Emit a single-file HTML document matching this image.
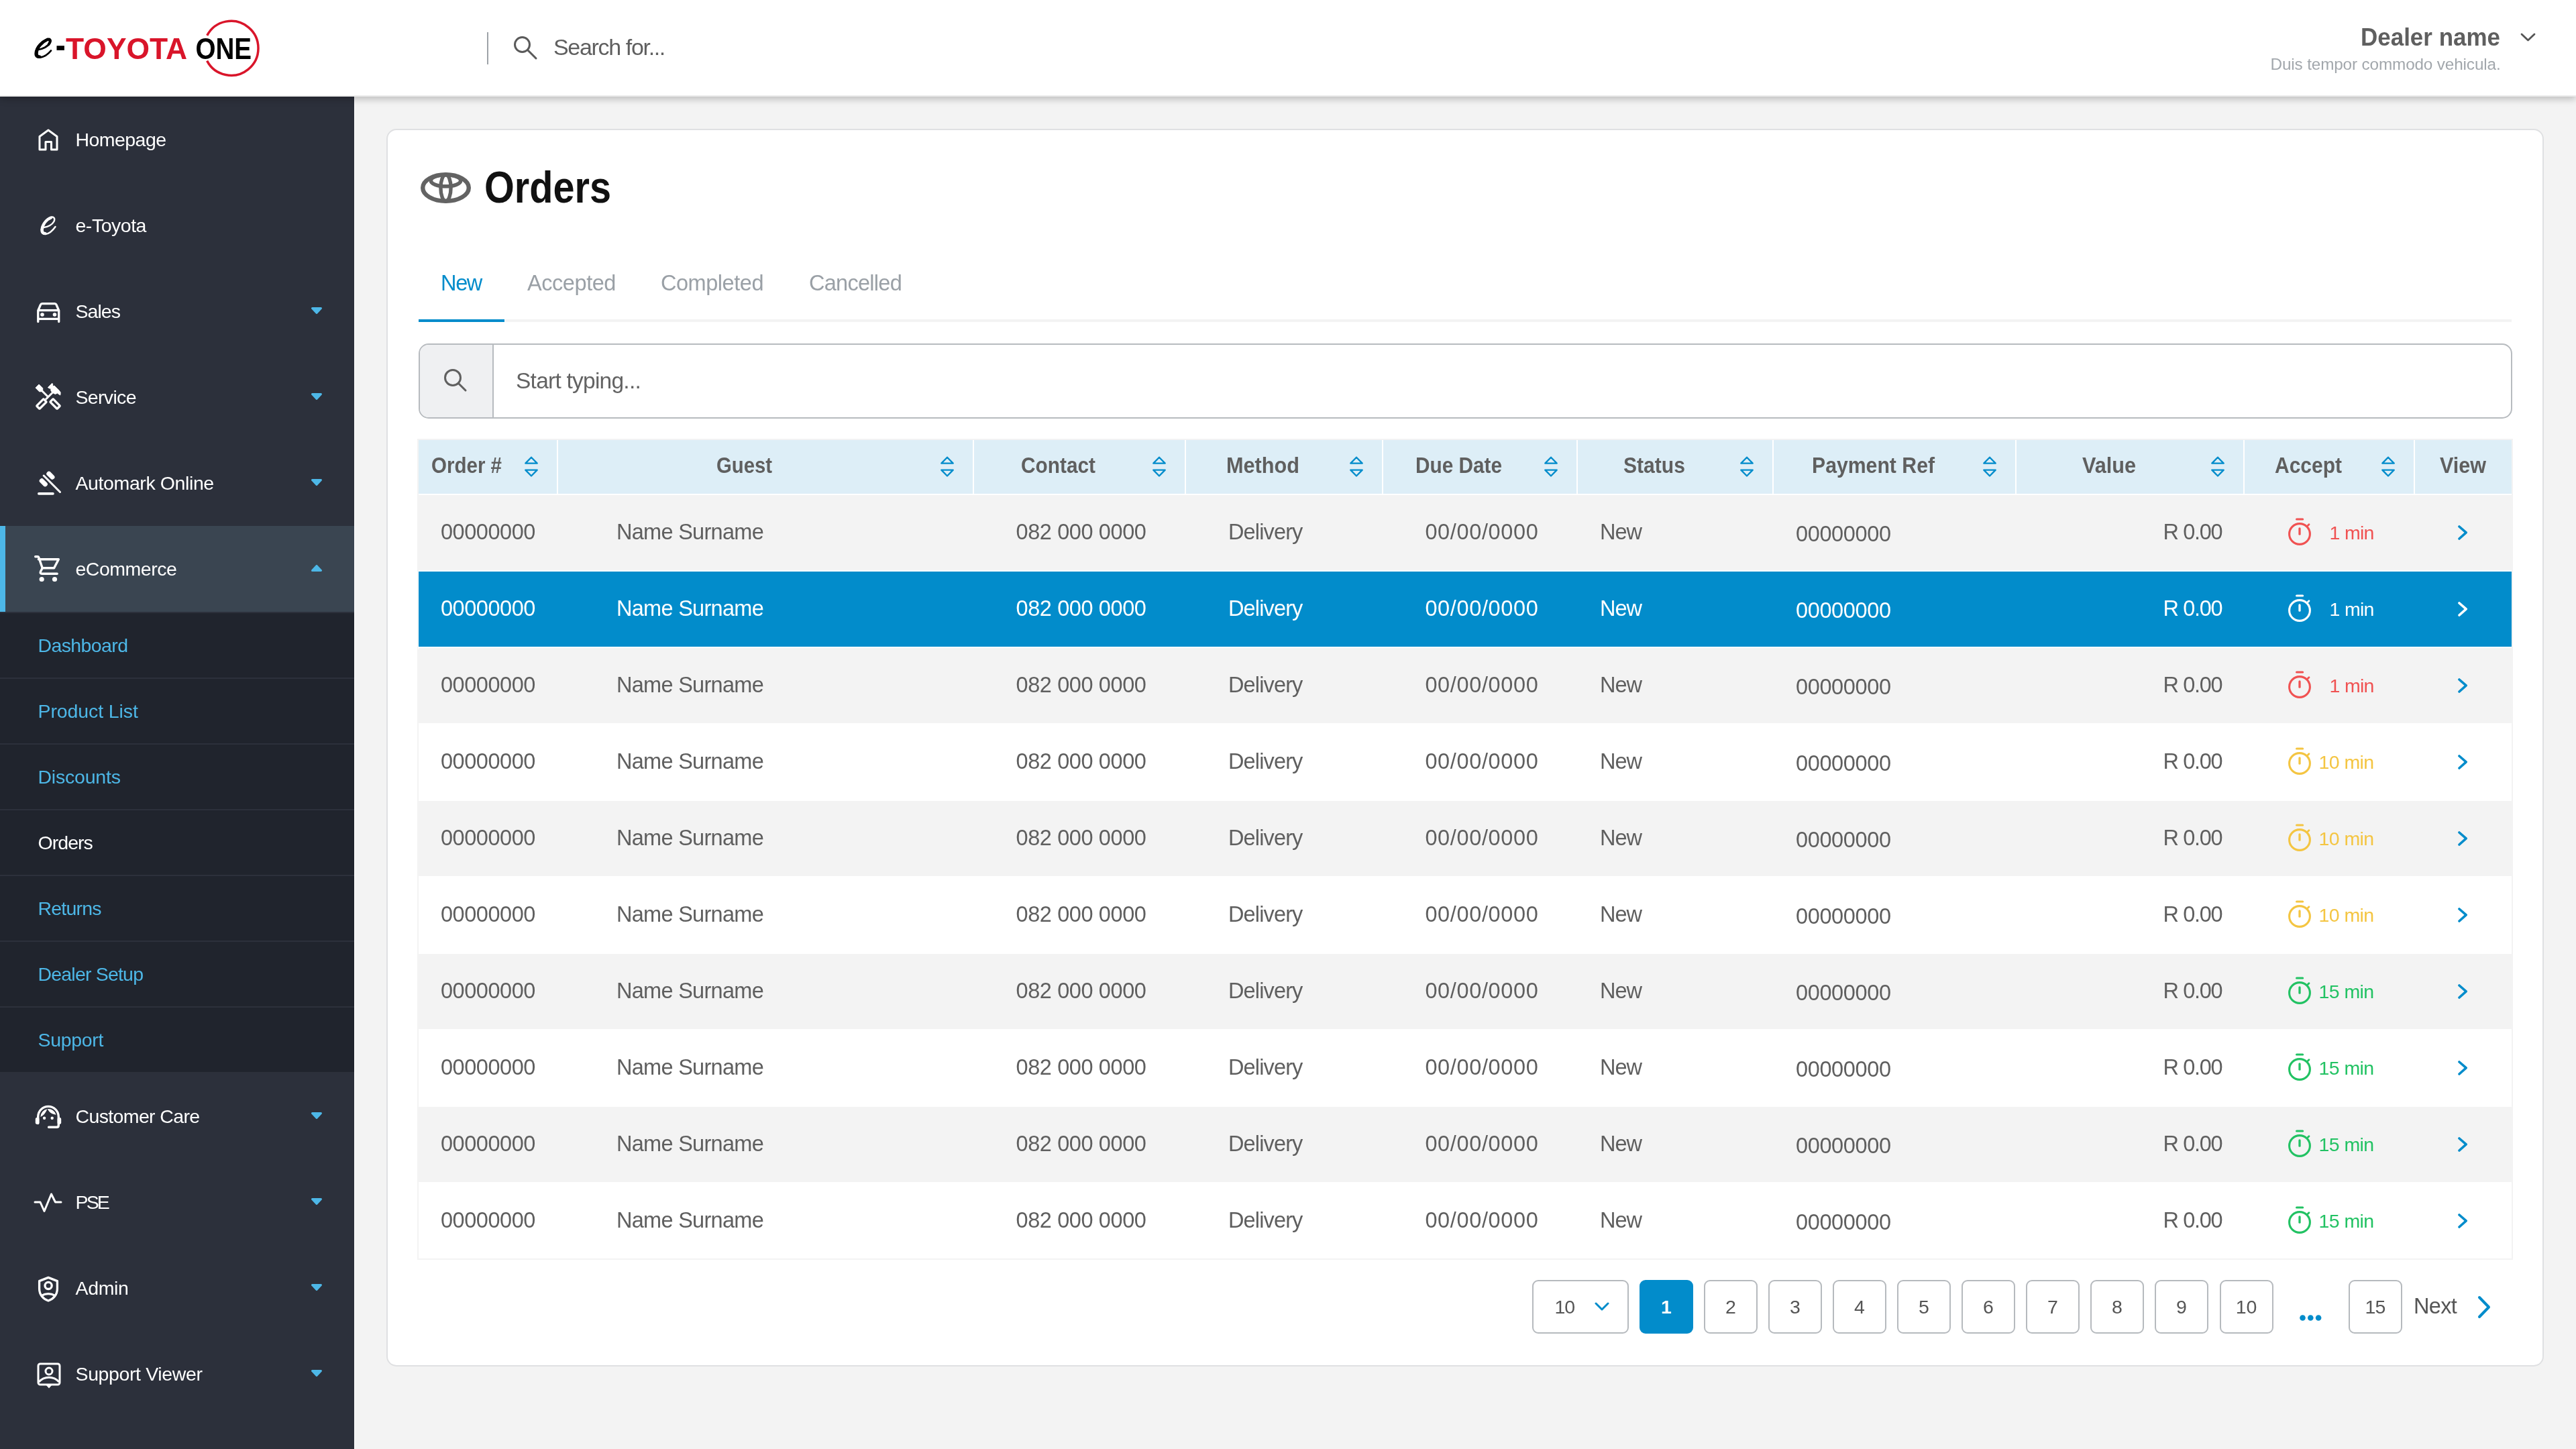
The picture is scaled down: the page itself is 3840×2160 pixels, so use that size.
<!DOCTYPE html>
<html><head><meta charset="utf-8"><title>Orders</title>
<style>
html,body{margin:0;padding:0;width:3840px;height:2160px;overflow:hidden;font-family:"Liberation Sans", sans-serif;}
</style></head><body>
<div style="position:absolute;left:0;top:0;width:3840px;height:2160px;overflow:hidden;will-change:transform">
<div style="position:absolute;left:0;top:0;width:3840px;height:2160px;background:#f3f3f3"></div>
<div style="position:absolute;left:0;top:144px;width:528px;height:2016px;background:#2c303b"></div>
<div style="position:absolute;left:528px;top:144px;width:1px;height:2016px;background:#ffffff"></div>
<div style="position:absolute;left:0;top:784px;width:528px;height:128px;background:#3a4551"></div>
<div style="position:absolute;left:0;top:784px;width:8px;height:128px;background:#4db7e7"></div>
<div style="position:absolute;left:0;top:912px;width:528px;height:686px;background:#20242d"></div>
<div style="position:absolute;left:0;top:912px;width:528px;height:2px;background:#2c303b"></div>
<div style="position:absolute;left:0;top:1010px;width:528px;height:2px;background:#2c303b"></div>
<div style="position:absolute;left:0;top:1108px;width:528px;height:2px;background:#2c303b"></div>
<div style="position:absolute;left:0;top:1206px;width:528px;height:2px;background:#2c303b"></div>
<div style="position:absolute;left:0;top:1304px;width:528px;height:2px;background:#2c303b"></div>
<div style="position:absolute;left:0;top:1402px;width:528px;height:2px;background:#2c303b"></div>
<div style="position:absolute;left:0;top:1500px;width:528px;height:2px;background:#2c303b"></div>
<div style="position:absolute;left:0;top:0;width:3840px;height:142px;background:#fff;border-bottom:2px solid #ececec;box-shadow:0 4px 10px rgba(0,0,0,0.22);z-index:2"></div>
<svg style="position:absolute;left:0;top:0;z-index:3" width="420" height="144" viewBox="0 0 420 144">
<path d="M 308.7 52.9 A 40.5 40.5 0 1 1 308.6 90.6" fill="none" stroke="#d9152a" stroke-width="3.5"/>
<text x="291.5" y="87.6" textLength="83.6" lengthAdjust="spacingAndGlyphs" font-family="Liberation Sans" font-weight="700" font-size="44.5" fill="#000">ONE</text>
<text x="98" y="87.8" textLength="181" lengthAdjust="spacingAndGlyphs" font-family="Liberation Sans" font-weight="700" font-size="44.5" fill="#d9152a">TOYOTA</text>
<rect x="84.5" y="68.2" width="11.4" height="6.7" fill="#000"/>
<path d="M57 73.8 C 63 73.3, 71.5 69.5, 74.8 63.5 C 76.8 59.5, 74.5 57, 70.5 58.5 C 62 61.5, 53.3 70.5, 52.8 79.5 C 52.6 84.3, 55.5 86.2, 60 85.5 C 66 84.7, 72 80.5, 76 75.5" fill="none" stroke="#000" stroke-width="2.8" stroke-linecap="round"/>
<path d="M70.5 59 C 63 62.3, 54.8 70.5, 54.5 79 C 54.3 83, 56 84.5, 59 84.6" fill="none" stroke="#000" stroke-width="4.6" stroke-linecap="round"/>
<path d="M72 59 C 75 59.5, 75.5 62.5, 72.5 66.3" fill="none" stroke="#000" stroke-width="3.8" stroke-linecap="round"/>
</svg>
<div style="position:absolute;left:726px;top:48px;width:2px;height:48px;background:#9ea3a8;z-index:3"></div>
<svg style="position:absolute;left:766px;top:54px;z-index:3" width="36" height="36" viewBox="0 0 36 36"><circle cx="12.5" cy="12.5" r="11" fill="none" stroke="#5a5a5a" stroke-width="3"/><line x1="20.5" y1="20.5" x2="33" y2="33" stroke="#5a5a5a" stroke-width="3" stroke-linecap="round"/></svg>
<div style="position:absolute;left:825.00px;top:53.10px;font-size:34px;line-height:34px;font-weight:400;color:#5f5f5f;letter-spacing:-1.333px;white-space:nowrap;z-index:3;">Search for...</div>
<div style="position:absolute;left:3519.00px;top:36.53px;font-size:37.5px;line-height:37.5px;font-weight:700;color:#5f5f5f;letter-spacing:0.000px;white-space:nowrap;z-index:3;transform:scaleX(0.9325);transform-origin:0 0;">Dealer name</div>
<svg style="position:absolute;left:3757px;top:49px;z-index:3" width="23" height="14" viewBox="0 0 23 14"><polyline points="2,2 11.5,11 21,2" fill="none" stroke="#555" stroke-width="2.8" stroke-linecap="round" stroke-linejoin="round"/></svg>
<div style="position:absolute;left:3384.50px;top:83.94px;font-size:24.3px;line-height:24.3px;font-weight:400;color:#a2a7ac;letter-spacing:-0.140px;white-space:nowrap;z-index:3;">Duis tempor commodo vehicula.</div>
<div style="position:absolute;left:112.50px;top:194.28px;font-size:28.5px;line-height:28.5px;font-weight:400;color:#ffffff;letter-spacing:-0.555px;white-space:nowrap;z-index:3;">Homepage</div>
<div style="position:absolute;left:112.50px;top:322.27px;font-size:28.5px;line-height:28.5px;font-weight:400;color:#ffffff;letter-spacing:-0.477px;white-space:nowrap;z-index:3;">e-Toyota</div>
<div style="position:absolute;left:112.50px;top:450.27px;font-size:28.5px;line-height:28.5px;font-weight:400;color:#ffffff;letter-spacing:-0.979px;white-space:nowrap;z-index:3;">Sales</div>
<svg style="position:absolute;left:464px;top:458px;z-index:3" width="16" height="10" viewBox="0 0 16 10"><path d="M1.5 1.5 L14.5 1.5 L8 8.5 Z" fill="#4db7e7" stroke="#4db7e7" stroke-width="3" stroke-linejoin="round"/></svg>
<div style="position:absolute;left:112.50px;top:578.27px;font-size:28.5px;line-height:28.5px;font-weight:400;color:#ffffff;letter-spacing:-0.664px;white-space:nowrap;z-index:3;">Service</div>
<svg style="position:absolute;left:464px;top:586px;z-index:3" width="16" height="10" viewBox="0 0 16 10"><path d="M1.5 1.5 L14.5 1.5 L8 8.5 Z" fill="#4db7e7" stroke="#4db7e7" stroke-width="3" stroke-linejoin="round"/></svg>
<div style="position:absolute;left:112.50px;top:706.27px;font-size:28.5px;line-height:28.5px;font-weight:400;color:#ffffff;letter-spacing:-0.398px;white-space:nowrap;z-index:3;">Automark Online</div>
<svg style="position:absolute;left:464px;top:714px;z-index:3" width="16" height="10" viewBox="0 0 16 10"><path d="M1.5 1.5 L14.5 1.5 L8 8.5 Z" fill="#4db7e7" stroke="#4db7e7" stroke-width="3" stroke-linejoin="round"/></svg>
<div style="position:absolute;left:112.50px;top:834.27px;font-size:28.5px;line-height:28.5px;font-weight:400;color:#ffffff;letter-spacing:-0.491px;white-space:nowrap;z-index:3;">eCommerce</div>
<svg style="position:absolute;left:464px;top:841.5px;z-index:3" width="16" height="10" viewBox="0 0 16 10"><path d="M8 1.5 L14.5 8.5 L1.5 8.5 Z" fill="#4db7e7" stroke="#4db7e7" stroke-width="3" stroke-linejoin="round"/></svg>
<div style="position:absolute;left:112.50px;top:1650.28px;font-size:28.5px;line-height:28.5px;font-weight:400;color:#ffffff;letter-spacing:-0.633px;white-space:nowrap;z-index:3;">Customer Care</div>
<svg style="position:absolute;left:464px;top:1658px;z-index:3" width="16" height="10" viewBox="0 0 16 10"><path d="M1.5 1.5 L14.5 1.5 L8 8.5 Z" fill="#4db7e7" stroke="#4db7e7" stroke-width="3" stroke-linejoin="round"/></svg>
<div style="position:absolute;left:112.50px;top:1778.28px;font-size:28.5px;line-height:28.5px;font-weight:400;color:#ffffff;letter-spacing:-2.877px;white-space:nowrap;z-index:3;">PSE</div>
<svg style="position:absolute;left:464px;top:1786px;z-index:3" width="16" height="10" viewBox="0 0 16 10"><path d="M1.5 1.5 L14.5 1.5 L8 8.5 Z" fill="#4db7e7" stroke="#4db7e7" stroke-width="3" stroke-linejoin="round"/></svg>
<div style="position:absolute;left:112.50px;top:1906.28px;font-size:28.5px;line-height:28.5px;font-weight:400;color:#ffffff;letter-spacing:-0.359px;white-space:nowrap;z-index:3;">Admin</div>
<svg style="position:absolute;left:464px;top:1914px;z-index:3" width="16" height="10" viewBox="0 0 16 10"><path d="M1.5 1.5 L14.5 1.5 L8 8.5 Z" fill="#4db7e7" stroke="#4db7e7" stroke-width="3" stroke-linejoin="round"/></svg>
<div style="position:absolute;left:112.50px;top:2034.28px;font-size:28.5px;line-height:28.5px;font-weight:400;color:#ffffff;letter-spacing:-0.382px;white-space:nowrap;z-index:3;">Support Viewer</div>
<svg style="position:absolute;left:464px;top:2042px;z-index:3" width="16" height="10" viewBox="0 0 16 10"><path d="M1.5 1.5 L14.5 1.5 L8 8.5 Z" fill="#4db7e7" stroke="#4db7e7" stroke-width="3" stroke-linejoin="round"/></svg>
<svg style="position:absolute;left:57px;top:192px;z-index:3" width="31" height="34" viewBox="0 0 31 34"><path d="M2 11.5 L15 2 L28 11.5 L28 31 L19.5 31 L19.5 19.5 L11 19.5 L11 31 L2 31 Z" fill="none" stroke="#fff" stroke-width="3" stroke-linecap="round" stroke-linejoin="round"/></svg>
<svg style="position:absolute;left:59px;top:321px;z-index:3" width="26" height="31" viewBox="0 0 26 31"><path d="M6 18 C 12 17.5, 19 14, 21.5 9 C 23.5 4.5, 21 1.5, 17 3 C 10 5.5, 3 13.5, 2.5 21.5 C 2.3 26, 5 28.5, 9 28 C 14 27.3, 19 23.5, 23.5 17" fill="none" stroke="#fff" stroke-width="2.4" stroke-linecap="round"/><path d="M17 3.5 C 10 6, 4 14, 3.8 21.5 C 3.6 25.5, 5.5 27, 8.5 27" fill="none" stroke="#fff" stroke-width="4.2" stroke-linecap="round"/></svg>
<svg style="position:absolute;left:55px;top:451px;z-index:3" width="35" height="31" viewBox="0 0 35 31"><path d="M1.75 28.5 L1.75 12 L5.4 3.4 Q 6.1 1.7 7.9 1.7 L26.6 1.7 Q 28.4 1.7 29.1 3.4 L32.75 12 L32.75 28.5" fill="none" stroke="#fff" stroke-width="3.3" stroke-linecap="round" stroke-linejoin="round"/><line x1="1.75" y1="11.6" x2="32.75" y2="11.6" stroke="#fff" stroke-width="3.3"/><line x1="1.75" y1="24.4" x2="32.75" y2="24.4" stroke="#fff" stroke-width="3.3"/><circle cx="8" cy="18" r="2.8" fill="#fff"/><circle cx="26.5" cy="18" r="2.8" fill="#fff"/></svg>
<svg style="position:absolute;left:52px;top:570px;z-index:3" width="40" height="42" viewBox="0 0 40 42"><polygon points="1,8.1 6.1,3 11.7,8.6 11.7,11.5 9.4,13.8 6.6,13.8" fill="#fff" stroke="#fff" stroke-width="1" stroke-linejoin="round"/><line x1="10" y1="12" x2="19.5" y2="21.5" stroke="#fff" stroke-width="3"/><rect x="-7.3" y="-3.1" width="14.6" height="6.2" rx="1" fill="none" stroke="#fff" stroke-width="3.3" transform="translate(30.1,32.1) rotate(45)"/><rect x="-7.3" y="-3.1" width="14.6" height="6.2" rx="1" fill="none" stroke="#fff" stroke-width="3.3" transform="translate(9.9,32.1) rotate(-45)"/><line x1="16" y1="25.5" x2="27.5" y2="14" stroke="#fff" stroke-width="3"/><polygon points="19.4,7.6 25.7,1.3 26.6,2.3 26.6,5.9 29,5 36.3,12.2 38.2,15.1 37.8,19 33.4,16.1 30.5,17.5 27.6,16.1 24.5,13.5 23.7,11.3 24.2,9.3 21.8,9" fill="#fff" stroke="#fff" stroke-width="1" stroke-linejoin="round"/></svg>
<svg style="position:absolute;left:52px;top:700px;z-index:3" width="40" height="40" viewBox="0 0 40 40"><g transform="translate(18.1,14) rotate(45)"><line x1="-7" y1="0" x2="27.5" y2="0" stroke="#fff" stroke-width="3" stroke-linecap="round"/><rect x="-7" y="-11" width="14" height="7" rx="3.2" fill="#fff"/><rect x="-7" y="4" width="14" height="7" rx="3.2" fill="#fff"/></g><line x1="5.8" y1="35.9" x2="27" y2="35.9" stroke="#fff" stroke-width="3.6" stroke-linecap="round"/></svg>
<svg style="position:absolute;left:51px;top:828px;z-index:3" width="40" height="40" viewBox="0 0 40 40"><path d="M1.7 1.8 L5 1.8 Q 6.3 1.8 6.8 3 L12.2 18.8 L29.6 18.8 L36.1 6.2 Q 36.6 5.8 36 5.8 L6.4 5.8" fill="none" stroke="#fff" stroke-width="3.4" stroke-linecap="round" stroke-linejoin="round"/><path d="M12.2 18.8 L9.5 24 Q 8.4 27.3 11.5 27.3 L34.2 27.3" fill="none" stroke="#fff" stroke-width="3.4" stroke-linecap="round" stroke-linejoin="round"/><circle cx="11.2" cy="35.5" r="3.6" fill="#fff"/><circle cx="30.5" cy="35.5" r="3.6" fill="#fff"/></svg>
<svg style="position:absolute;left:52px;top:1646px;z-index:3" width="40" height="40" viewBox="0 0 40 40"><path d="M4.7 28.5 L4.7 18.7 A 15.3 15.3 0 0 1 35.3 18.7 L35.3 31.5 Q 35.3 34.3 32.5 34.3 L20.6 34.3" fill="none" stroke="#fff" stroke-width="3.4" stroke-linecap="round"/><rect x="0.8" y="19.8" width="5.6" height="10.1" rx="2.7" fill="#fff"/><rect x="33.6" y="19.8" width="5.6" height="10.1" rx="2.7" fill="#fff"/><path d="M8.4 19 A 11.8 11.8 0 0 1 31.6 15.8 C 25.5 15.2, 21 12, 18.6 6.6 C 16.5 12.5, 13 17, 8.4 19 Z" fill="#fff"/><circle cx="14.1" cy="20.7" r="2.2" fill="#fff"/><circle cx="25.7" cy="20.7" r="2.2" fill="#fff"/></svg>
<svg style="position:absolute;left:50px;top:1777px;z-index:3" width="44" height="32" viewBox="0 0 44 32"><polyline points="2,15 10,15 16,28.5 26.5,3 32.5,15 41,15" fill="none" stroke="#fff" stroke-width="3" stroke-linecap="round" stroke-linejoin="round"/></svg>
<svg style="position:absolute;left:56px;top:1902px;z-index:3" width="32" height="40" viewBox="0 0 32 40"><path d="M16 2.4 L29.4 7.6 L29.4 19 C 29.4 28, 23.5 34.5, 16 37 C 8.5 34.5, 2.6 28, 2.6 19 L2.6 7.6 Z" fill="none" stroke="#fff" stroke-width="3.3" stroke-linejoin="round"/><circle cx="16.1" cy="14.4" r="5.1" fill="none" stroke="#fff" stroke-width="3.3"/><path d="M7 28.8 C 11.5 25.8, 20.5 25.8, 25 28.8" fill="none" stroke="#fff" stroke-width="3.3"/></svg>
<svg style="position:absolute;left:55px;top:2031px;z-index:3" width="36" height="40" viewBox="0 0 36 40"><rect x="2" y="2" width="32" height="31" rx="3" fill="none" stroke="#fff" stroke-width="3"/><circle cx="18" cy="13" r="5" fill="none" stroke="#fff" stroke-width="3"/><path d="M3 29 C 11 20, 25 20, 33 29" fill="none" stroke="#fff" stroke-width="3"/><path d="M13 33 L18 38.5 L23 33 Z" fill="#fff"/></svg>
<div style="position:absolute;left:56.50px;top:947.77px;font-size:28.5px;line-height:28.5px;font-weight:400;color:#4db7e7;letter-spacing:-0.604px;white-space:nowrap;z-index:3;">Dashboard</div>
<div style="position:absolute;left:56.50px;top:1045.78px;font-size:28.5px;line-height:28.5px;font-weight:400;color:#4db7e7;letter-spacing:-0.100px;white-space:nowrap;z-index:3;">Product List</div>
<div style="position:absolute;left:56.50px;top:1143.78px;font-size:28.5px;line-height:28.5px;font-weight:400;color:#4db7e7;letter-spacing:-0.216px;white-space:nowrap;z-index:3;">Discounts</div>
<div style="position:absolute;left:56.50px;top:1241.78px;font-size:28.5px;line-height:28.5px;font-weight:400;color:#ffffff;letter-spacing:-0.952px;white-space:nowrap;z-index:3;">Orders</div>
<div style="position:absolute;left:56.50px;top:1339.78px;font-size:28.5px;line-height:28.5px;font-weight:400;color:#4db7e7;letter-spacing:-0.800px;white-space:nowrap;z-index:3;">Returns</div>
<div style="position:absolute;left:56.50px;top:1437.78px;font-size:28.5px;line-height:28.5px;font-weight:400;color:#4db7e7;letter-spacing:-0.805px;white-space:nowrap;z-index:3;">Dealer Setup</div>
<div style="position:absolute;left:56.50px;top:1535.78px;font-size:28.5px;line-height:28.5px;font-weight:400;color:#4db7e7;letter-spacing:-0.333px;white-space:nowrap;z-index:3;">Support</div>
<div style="position:absolute;left:576px;top:192px;width:3212px;height:1840.5px;background:#fff;border:2px solid #dfe0e2;border-radius:15px"></div>
<svg style="position:absolute;left:627px;top:257px;z-index:3" width="75" height="46" viewBox="0 0 75 46"><ellipse cx="37.5" cy="23" rx="34.3" ry="19.8" fill="none" stroke="#636363" stroke-width="6.4"/><ellipse cx="37.5" cy="12.2" rx="22.2" ry="8.6" fill="none" stroke="#636363" stroke-width="5.6"/><ellipse cx="37.5" cy="23" rx="7.6" ry="19.8" fill="none" stroke="#636363" stroke-width="5.4"/></svg>
<div style="position:absolute;left:722.00px;top:245.25px;font-size:67px;line-height:67px;font-weight:700;color:#111111;letter-spacing:0.000px;white-space:nowrap;z-index:3;transform:scaleX(0.8602);transform-origin:0 0;">Orders</div>
<div style="position:absolute;left:657.00px;top:406.38px;font-size:32.5px;line-height:32.5px;font-weight:400;color:#028ccb;letter-spacing:-1.344px;white-space:nowrap;z-index:3;">New</div>
<div style="position:absolute;left:786.00px;top:406.38px;font-size:32.5px;line-height:32.5px;font-weight:400;color:#9aa0a6;letter-spacing:-0.439px;white-space:nowrap;z-index:3;">Accepted</div>
<div style="position:absolute;left:985.00px;top:406.38px;font-size:32.5px;line-height:32.5px;font-weight:400;color:#9aa0a6;letter-spacing:-0.464px;white-space:nowrap;z-index:3;">Completed</div>
<div style="position:absolute;left:1206.00px;top:406.38px;font-size:32.5px;line-height:32.5px;font-weight:400;color:#9aa0a6;letter-spacing:-0.727px;white-space:nowrap;z-index:3;">Cancelled</div>
<div style="position:absolute;left:753px;top:476px;width:2991px;height:4px;background:#f3f3f3"></div>
<div style="position:absolute;left:624px;top:476px;width:128px;height:4px;background:#028ccb"></div>
<div style="position:absolute;left:624px;top:512px;width:3117px;height:108px;border:2px solid #b7bbbf;border-radius:15px;background:#fff"></div>
<div style="position:absolute;left:626px;top:514px;width:108px;height:108px;background:#eff0f2;border-radius:13px 0 0 13px;border-right:2px solid #b7bbbf"></div>
<svg style="position:absolute;left:661px;top:549px;z-index:3" width="36" height="36" viewBox="0 0 36 36"><circle cx="14" cy="14" r="11.5" fill="none" stroke="#606060" stroke-width="3"/><line x1="22.5" y1="22.5" x2="33" y2="33" stroke="#606060" stroke-width="3" stroke-linecap="round"/></svg>
<div style="position:absolute;left:769.00px;top:550.52px;font-size:33.5px;line-height:33.5px;font-weight:400;color:#636363;letter-spacing:-0.758px;white-space:nowrap;z-index:3;">Start typing...</div>
<div style="position:absolute;left:622px;top:654px;width:3124px;height:1224px;background:#f3f3f3"></div>
<div style="position:absolute;left:624px;top:656px;width:3120px;height:80px;background:#ddeef7"></div>
<div style="position:absolute;left:830px;top:656px;width:2px;height:80px;background:#fff"></div>
<div style="position:absolute;left:1450px;top:656px;width:2px;height:80px;background:#fff"></div>
<div style="position:absolute;left:1766px;top:656px;width:2px;height:80px;background:#fff"></div>
<div style="position:absolute;left:2060px;top:656px;width:2px;height:80px;background:#fff"></div>
<div style="position:absolute;left:2350px;top:656px;width:2px;height:80px;background:#fff"></div>
<div style="position:absolute;left:2642px;top:656px;width:2px;height:80px;background:#fff"></div>
<div style="position:absolute;left:3004px;top:656px;width:2px;height:80px;background:#fff"></div>
<div style="position:absolute;left:3344px;top:656px;width:2px;height:80px;background:#fff"></div>
<div style="position:absolute;left:3598px;top:656px;width:2px;height:80px;background:#fff"></div>
<svg style="position:absolute;left:781px;top:679.5px;z-index:3" width="22" height="32" viewBox="0 0 22 32"><path d="M2.3 10.6 L11 1.7 L19.7 10.6 Z" fill="none" stroke="#028ccb" stroke-width="2.35" stroke-linejoin="round"/><path d="M2.3 20.6 L11 29.5 L19.7 20.6 Z" fill="none" stroke="#028ccb" stroke-width="2.35" stroke-linejoin="round"/></svg>
<div style="position:absolute;left:643.00px;top:678.38px;font-size:32.5px;line-height:32.5px;font-weight:700;color:#5f5f5f;letter-spacing:0.000px;white-space:nowrap;z-index:3;transform:scaleX(0.9082);transform-origin:0 0;">Order #</div>
<svg style="position:absolute;left:1401px;top:679.5px;z-index:3" width="22" height="32" viewBox="0 0 22 32"><path d="M2.3 10.6 L11 1.7 L19.7 10.6 Z" fill="none" stroke="#028ccb" stroke-width="2.35" stroke-linejoin="round"/><path d="M2.3 20.6 L11 29.5 L19.7 20.6 Z" fill="none" stroke="#028ccb" stroke-width="2.35" stroke-linejoin="round"/></svg>
<div style="position:absolute;left:1068.00px;top:678.38px;font-size:32.5px;line-height:32.5px;font-weight:700;color:#5f5f5f;letter-spacing:0.000px;white-space:nowrap;z-index:3;transform:scaleX(0.9011);transform-origin:0 0;">Guest</div>
<svg style="position:absolute;left:1717px;top:679.5px;z-index:3" width="22" height="32" viewBox="0 0 22 32"><path d="M2.3 10.6 L11 1.7 L19.7 10.6 Z" fill="none" stroke="#028ccb" stroke-width="2.35" stroke-linejoin="round"/><path d="M2.3 20.6 L11 29.5 L19.7 20.6 Z" fill="none" stroke="#028ccb" stroke-width="2.35" stroke-linejoin="round"/></svg>
<div style="position:absolute;left:1522.00px;top:678.38px;font-size:32.5px;line-height:32.5px;font-weight:700;color:#5f5f5f;letter-spacing:0.000px;white-space:nowrap;z-index:3;transform:scaleX(0.9175);transform-origin:0 0;">Contact</div>
<svg style="position:absolute;left:2011px;top:679.5px;z-index:3" width="22" height="32" viewBox="0 0 22 32"><path d="M2.3 10.6 L11 1.7 L19.7 10.6 Z" fill="none" stroke="#028ccb" stroke-width="2.35" stroke-linejoin="round"/><path d="M2.3 20.6 L11 29.5 L19.7 20.6 Z" fill="none" stroke="#028ccb" stroke-width="2.35" stroke-linejoin="round"/></svg>
<div style="position:absolute;left:1828.00px;top:678.38px;font-size:32.5px;line-height:32.5px;font-weight:700;color:#5f5f5f;letter-spacing:0.000px;white-space:nowrap;z-index:3;transform:scaleX(0.9435);transform-origin:0 0;">Method</div>
<svg style="position:absolute;left:2301px;top:679.5px;z-index:3" width="22" height="32" viewBox="0 0 22 32"><path d="M2.3 10.6 L11 1.7 L19.7 10.6 Z" fill="none" stroke="#028ccb" stroke-width="2.35" stroke-linejoin="round"/><path d="M2.3 20.6 L11 29.5 L19.7 20.6 Z" fill="none" stroke="#028ccb" stroke-width="2.35" stroke-linejoin="round"/></svg>
<div style="position:absolute;left:2110.00px;top:678.38px;font-size:32.5px;line-height:32.5px;font-weight:700;color:#5f5f5f;letter-spacing:0.000px;white-space:nowrap;z-index:3;transform:scaleX(0.9157);transform-origin:0 0;">Due Date</div>
<svg style="position:absolute;left:2593px;top:679.5px;z-index:3" width="22" height="32" viewBox="0 0 22 32"><path d="M2.3 10.6 L11 1.7 L19.7 10.6 Z" fill="none" stroke="#028ccb" stroke-width="2.35" stroke-linejoin="round"/><path d="M2.3 20.6 L11 29.5 L19.7 20.6 Z" fill="none" stroke="#028ccb" stroke-width="2.35" stroke-linejoin="round"/></svg>
<div style="position:absolute;left:2419.50px;top:678.38px;font-size:32.5px;line-height:32.5px;font-weight:700;color:#5f5f5f;letter-spacing:0.000px;white-space:nowrap;z-index:3;transform:scaleX(0.9262);transform-origin:0 0;">Status</div>
<svg style="position:absolute;left:2955px;top:679.5px;z-index:3" width="22" height="32" viewBox="0 0 22 32"><path d="M2.3 10.6 L11 1.7 L19.7 10.6 Z" fill="none" stroke="#028ccb" stroke-width="2.35" stroke-linejoin="round"/><path d="M2.3 20.6 L11 29.5 L19.7 20.6 Z" fill="none" stroke="#028ccb" stroke-width="2.35" stroke-linejoin="round"/></svg>
<div style="position:absolute;left:2701.00px;top:678.38px;font-size:32.5px;line-height:32.5px;font-weight:700;color:#5f5f5f;letter-spacing:0.000px;white-space:nowrap;z-index:3;transform:scaleX(0.9295);transform-origin:0 0;">Payment Ref</div>
<svg style="position:absolute;left:3295px;top:679.5px;z-index:3" width="22" height="32" viewBox="0 0 22 32"><path d="M2.3 10.6 L11 1.7 L19.7 10.6 Z" fill="none" stroke="#028ccb" stroke-width="2.35" stroke-linejoin="round"/><path d="M2.3 20.6 L11 29.5 L19.7 20.6 Z" fill="none" stroke="#028ccb" stroke-width="2.35" stroke-linejoin="round"/></svg>
<div style="position:absolute;left:3103.50px;top:678.38px;font-size:32.5px;line-height:32.5px;font-weight:700;color:#5f5f5f;letter-spacing:0.000px;white-space:nowrap;z-index:3;transform:scaleX(0.9420);transform-origin:0 0;">Value</div>
<svg style="position:absolute;left:3549px;top:679.5px;z-index:3" width="22" height="32" viewBox="0 0 22 32"><path d="M2.3 10.6 L11 1.7 L19.7 10.6 Z" fill="none" stroke="#028ccb" stroke-width="2.35" stroke-linejoin="round"/><path d="M2.3 20.6 L11 29.5 L19.7 20.6 Z" fill="none" stroke="#028ccb" stroke-width="2.35" stroke-linejoin="round"/></svg>
<div style="position:absolute;left:3390.50px;top:678.38px;font-size:32.5px;line-height:32.5px;font-weight:700;color:#5f5f5f;letter-spacing:0.000px;white-space:nowrap;z-index:3;transform:scaleX(0.9227);transform-origin:0 0;">Accept</div>
<div style="position:absolute;left:3637.00px;top:678.38px;font-size:32.5px;line-height:32.5px;font-weight:700;color:#5f5f5f;letter-spacing:0.000px;white-space:nowrap;z-index:3;transform:scaleX(0.9390);transform-origin:0 0;">View</div>
<div style="position:absolute;left:624px;top:736px;width:3120px;height:2px;background:#fff"></div>
<div style="position:absolute;left:624px;top:738px;width:3120px;height:112px;background:#f3f3f3"></div>
<div style="position:absolute;left:657.00px;top:776.58px;font-size:32.5px;line-height:32.5px;font-weight:400;color:#5f5f5f;letter-spacing:-0.451px;white-space:nowrap;z-index:3;">00000000</div>
<div style="position:absolute;left:919.00px;top:776.58px;font-size:32.5px;line-height:32.5px;font-weight:400;color:#5f5f5f;letter-spacing:-0.717px;white-space:nowrap;z-index:3;">Name Surname</div>
<div style="position:absolute;left:1514.50px;top:776.58px;font-size:32.5px;line-height:32.5px;font-weight:400;color:#5f5f5f;letter-spacing:-0.401px;white-space:nowrap;z-index:3;">082 000 0000</div>
<div style="position:absolute;left:1831.00px;top:776.58px;font-size:32.5px;line-height:32.5px;font-weight:400;color:#5f5f5f;letter-spacing:-0.861px;white-space:nowrap;z-index:3;">Delivery</div>
<div style="position:absolute;left:2124.40px;top:776.58px;font-size:32.5px;line-height:32.5px;font-weight:400;color:#5f5f5f;letter-spacing:0.633px;white-space:nowrap;z-index:3;">00/00/0000</div>
<div style="position:absolute;left:2385.00px;top:776.58px;font-size:32.5px;line-height:32.5px;font-weight:400;color:#5f5f5f;letter-spacing:-1.010px;white-space:nowrap;z-index:3;">New</div>
<div style="position:absolute;left:2677.00px;top:779.98px;font-size:32.5px;line-height:32.5px;font-weight:400;color:#5f5f5f;letter-spacing:-0.376px;white-space:nowrap;z-index:3;">00000000</div>
<div style="position:absolute;left:3224.40px;top:776.58px;font-size:32.5px;line-height:32.5px;font-weight:400;color:#5f5f5f;letter-spacing:-1.294px;white-space:nowrap;z-index:3;">R 0.00</div>
<svg style="position:absolute;left:3411px;top:769px;z-index:3" width="35" height="46" viewBox="0 0 35 46"><circle cx="17" cy="27" r="15.4" fill="none" stroke="#f05252" stroke-width="3.1"/><line x1="12.6" y1="5" x2="21.6" y2="5" stroke="#f05252" stroke-width="3.2" stroke-linecap="round"/><line x1="17" y1="19" x2="17" y2="27.2" stroke="#f05252" stroke-width="3.3" stroke-linecap="round"/><line x1="29.2" y1="14.6" x2="31" y2="12.8" stroke="#f05252" stroke-width="2.8" stroke-linecap="round"/></svg>
<div style="position:absolute;left:3472.60px;top:779.88px;font-size:28.5px;line-height:28.5px;font-weight:400;color:#f05252;letter-spacing:-0.741px;white-space:nowrap;z-index:3;">1 min</div>
<svg style="position:absolute;left:3663.5px;top:782.8px;z-index:3" width="16" height="23" viewBox="0 0 16 23"><polyline points="2,2 12.2,10.9 2,20" fill="none" stroke="#028ccb" stroke-width="3.6" stroke-linecap="round" stroke-linejoin="round"/></svg>
<div style="position:absolute;left:624px;top:850px;width:3120px;height:2px;background:#fff"></div>
<div style="position:absolute;left:623px;top:852px;width:3121px;height:116px;background:#fff"></div>
<div style="position:absolute;left:624px;top:852px;width:3120px;height:112px;background:#028ccb"></div>
<div style="position:absolute;left:657.00px;top:890.58px;font-size:32.5px;line-height:32.5px;font-weight:400;color:#ffffff;letter-spacing:-0.451px;white-space:nowrap;z-index:3;">00000000</div>
<div style="position:absolute;left:919.00px;top:890.58px;font-size:32.5px;line-height:32.5px;font-weight:400;color:#ffffff;letter-spacing:-0.717px;white-space:nowrap;z-index:3;">Name Surname</div>
<div style="position:absolute;left:1514.50px;top:890.58px;font-size:32.5px;line-height:32.5px;font-weight:400;color:#ffffff;letter-spacing:-0.401px;white-space:nowrap;z-index:3;">082 000 0000</div>
<div style="position:absolute;left:1831.00px;top:890.58px;font-size:32.5px;line-height:32.5px;font-weight:400;color:#ffffff;letter-spacing:-0.861px;white-space:nowrap;z-index:3;">Delivery</div>
<div style="position:absolute;left:2124.40px;top:890.58px;font-size:32.5px;line-height:32.5px;font-weight:400;color:#ffffff;letter-spacing:0.633px;white-space:nowrap;z-index:3;">00/00/0000</div>
<div style="position:absolute;left:2385.00px;top:890.58px;font-size:32.5px;line-height:32.5px;font-weight:400;color:#ffffff;letter-spacing:-1.010px;white-space:nowrap;z-index:3;">New</div>
<div style="position:absolute;left:2677.00px;top:893.98px;font-size:32.5px;line-height:32.5px;font-weight:400;color:#ffffff;letter-spacing:-0.376px;white-space:nowrap;z-index:3;">00000000</div>
<div style="position:absolute;left:3224.40px;top:890.58px;font-size:32.5px;line-height:32.5px;font-weight:400;color:#ffffff;letter-spacing:-1.294px;white-space:nowrap;z-index:3;">R 0.00</div>
<svg style="position:absolute;left:3411px;top:883px;z-index:3" width="35" height="46" viewBox="0 0 35 46"><circle cx="17" cy="27" r="15.4" fill="none" stroke="#ffffff" stroke-width="3.1"/><line x1="12.6" y1="5" x2="21.6" y2="5" stroke="#ffffff" stroke-width="3.2" stroke-linecap="round"/><line x1="17" y1="19" x2="17" y2="27.2" stroke="#ffffff" stroke-width="3.3" stroke-linecap="round"/><line x1="29.2" y1="14.6" x2="31" y2="12.8" stroke="#ffffff" stroke-width="2.8" stroke-linecap="round"/></svg>
<div style="position:absolute;left:3472.60px;top:893.88px;font-size:28.5px;line-height:28.5px;font-weight:400;color:#ffffff;letter-spacing:-0.741px;white-space:nowrap;z-index:3;">1 min</div>
<svg style="position:absolute;left:3663.5px;top:896.8px;z-index:3" width="16" height="23" viewBox="0 0 16 23"><polyline points="2,2 12.2,10.9 2,20" fill="none" stroke="#ffffff" stroke-width="3.6" stroke-linecap="round" stroke-linejoin="round"/></svg>
<div style="position:absolute;left:624px;top:964px;width:3120px;height:2px;background:#fff"></div>
<div style="position:absolute;left:624px;top:966px;width:3120px;height:112px;background:#f3f3f3"></div>
<div style="position:absolute;left:657.00px;top:1004.58px;font-size:32.5px;line-height:32.5px;font-weight:400;color:#5f5f5f;letter-spacing:-0.451px;white-space:nowrap;z-index:3;">00000000</div>
<div style="position:absolute;left:919.00px;top:1004.58px;font-size:32.5px;line-height:32.5px;font-weight:400;color:#5f5f5f;letter-spacing:-0.717px;white-space:nowrap;z-index:3;">Name Surname</div>
<div style="position:absolute;left:1514.50px;top:1004.58px;font-size:32.5px;line-height:32.5px;font-weight:400;color:#5f5f5f;letter-spacing:-0.401px;white-space:nowrap;z-index:3;">082 000 0000</div>
<div style="position:absolute;left:1831.00px;top:1004.58px;font-size:32.5px;line-height:32.5px;font-weight:400;color:#5f5f5f;letter-spacing:-0.861px;white-space:nowrap;z-index:3;">Delivery</div>
<div style="position:absolute;left:2124.40px;top:1004.58px;font-size:32.5px;line-height:32.5px;font-weight:400;color:#5f5f5f;letter-spacing:0.633px;white-space:nowrap;z-index:3;">00/00/0000</div>
<div style="position:absolute;left:2385.00px;top:1004.58px;font-size:32.5px;line-height:32.5px;font-weight:400;color:#5f5f5f;letter-spacing:-1.010px;white-space:nowrap;z-index:3;">New</div>
<div style="position:absolute;left:2677.00px;top:1007.98px;font-size:32.5px;line-height:32.5px;font-weight:400;color:#5f5f5f;letter-spacing:-0.376px;white-space:nowrap;z-index:3;">00000000</div>
<div style="position:absolute;left:3224.40px;top:1004.58px;font-size:32.5px;line-height:32.5px;font-weight:400;color:#5f5f5f;letter-spacing:-1.294px;white-space:nowrap;z-index:3;">R 0.00</div>
<svg style="position:absolute;left:3411px;top:997px;z-index:3" width="35" height="46" viewBox="0 0 35 46"><circle cx="17" cy="27" r="15.4" fill="none" stroke="#f05252" stroke-width="3.1"/><line x1="12.6" y1="5" x2="21.6" y2="5" stroke="#f05252" stroke-width="3.2" stroke-linecap="round"/><line x1="17" y1="19" x2="17" y2="27.2" stroke="#f05252" stroke-width="3.3" stroke-linecap="round"/><line x1="29.2" y1="14.6" x2="31" y2="12.8" stroke="#f05252" stroke-width="2.8" stroke-linecap="round"/></svg>
<div style="position:absolute;left:3472.60px;top:1007.87px;font-size:28.5px;line-height:28.5px;font-weight:400;color:#f05252;letter-spacing:-0.741px;white-space:nowrap;z-index:3;">1 min</div>
<svg style="position:absolute;left:3663.5px;top:1010.8px;z-index:3" width="16" height="23" viewBox="0 0 16 23"><polyline points="2,2 12.2,10.9 2,20" fill="none" stroke="#028ccb" stroke-width="3.6" stroke-linecap="round" stroke-linejoin="round"/></svg>
<div style="position:absolute;left:624px;top:1078px;width:3120px;height:2px;background:#fff"></div>
<div style="position:absolute;left:624px;top:1080px;width:3120px;height:112px;background:#ffffff"></div>
<div style="position:absolute;left:657.00px;top:1118.58px;font-size:32.5px;line-height:32.5px;font-weight:400;color:#5f5f5f;letter-spacing:-0.451px;white-space:nowrap;z-index:3;">00000000</div>
<div style="position:absolute;left:919.00px;top:1118.58px;font-size:32.5px;line-height:32.5px;font-weight:400;color:#5f5f5f;letter-spacing:-0.717px;white-space:nowrap;z-index:3;">Name Surname</div>
<div style="position:absolute;left:1514.50px;top:1118.58px;font-size:32.5px;line-height:32.5px;font-weight:400;color:#5f5f5f;letter-spacing:-0.401px;white-space:nowrap;z-index:3;">082 000 0000</div>
<div style="position:absolute;left:1831.00px;top:1118.58px;font-size:32.5px;line-height:32.5px;font-weight:400;color:#5f5f5f;letter-spacing:-0.861px;white-space:nowrap;z-index:3;">Delivery</div>
<div style="position:absolute;left:2124.40px;top:1118.58px;font-size:32.5px;line-height:32.5px;font-weight:400;color:#5f5f5f;letter-spacing:0.633px;white-space:nowrap;z-index:3;">00/00/0000</div>
<div style="position:absolute;left:2385.00px;top:1118.58px;font-size:32.5px;line-height:32.5px;font-weight:400;color:#5f5f5f;letter-spacing:-1.010px;white-space:nowrap;z-index:3;">New</div>
<div style="position:absolute;left:2677.00px;top:1121.98px;font-size:32.5px;line-height:32.5px;font-weight:400;color:#5f5f5f;letter-spacing:-0.376px;white-space:nowrap;z-index:3;">00000000</div>
<div style="position:absolute;left:3224.40px;top:1118.58px;font-size:32.5px;line-height:32.5px;font-weight:400;color:#5f5f5f;letter-spacing:-1.294px;white-space:nowrap;z-index:3;">R 0.00</div>
<svg style="position:absolute;left:3411px;top:1111px;z-index:3" width="35" height="46" viewBox="0 0 35 46"><circle cx="17" cy="27" r="15.4" fill="none" stroke="#f4c542" stroke-width="3.1"/><line x1="12.6" y1="5" x2="21.6" y2="5" stroke="#f4c542" stroke-width="3.2" stroke-linecap="round"/><line x1="17" y1="19" x2="17" y2="27.2" stroke="#f4c542" stroke-width="3.3" stroke-linecap="round"/><line x1="29.2" y1="14.6" x2="31" y2="12.8" stroke="#f4c542" stroke-width="2.8" stroke-linecap="round"/></svg>
<div style="position:absolute;left:3456.60px;top:1121.88px;font-size:28.5px;line-height:28.5px;font-weight:400;color:#f4c542;letter-spacing:-0.591px;white-space:nowrap;z-index:3;">10 min</div>
<svg style="position:absolute;left:3663.5px;top:1124.8px;z-index:3" width="16" height="23" viewBox="0 0 16 23"><polyline points="2,2 12.2,10.9 2,20" fill="none" stroke="#028ccb" stroke-width="3.6" stroke-linecap="round" stroke-linejoin="round"/></svg>
<div style="position:absolute;left:624px;top:1192px;width:3120px;height:2px;background:#fff"></div>
<div style="position:absolute;left:624px;top:1194px;width:3120px;height:112px;background:#f3f3f3"></div>
<div style="position:absolute;left:657.00px;top:1232.58px;font-size:32.5px;line-height:32.5px;font-weight:400;color:#5f5f5f;letter-spacing:-0.451px;white-space:nowrap;z-index:3;">00000000</div>
<div style="position:absolute;left:919.00px;top:1232.58px;font-size:32.5px;line-height:32.5px;font-weight:400;color:#5f5f5f;letter-spacing:-0.717px;white-space:nowrap;z-index:3;">Name Surname</div>
<div style="position:absolute;left:1514.50px;top:1232.58px;font-size:32.5px;line-height:32.5px;font-weight:400;color:#5f5f5f;letter-spacing:-0.401px;white-space:nowrap;z-index:3;">082 000 0000</div>
<div style="position:absolute;left:1831.00px;top:1232.58px;font-size:32.5px;line-height:32.5px;font-weight:400;color:#5f5f5f;letter-spacing:-0.861px;white-space:nowrap;z-index:3;">Delivery</div>
<div style="position:absolute;left:2124.40px;top:1232.58px;font-size:32.5px;line-height:32.5px;font-weight:400;color:#5f5f5f;letter-spacing:0.633px;white-space:nowrap;z-index:3;">00/00/0000</div>
<div style="position:absolute;left:2385.00px;top:1232.58px;font-size:32.5px;line-height:32.5px;font-weight:400;color:#5f5f5f;letter-spacing:-1.010px;white-space:nowrap;z-index:3;">New</div>
<div style="position:absolute;left:2677.00px;top:1235.98px;font-size:32.5px;line-height:32.5px;font-weight:400;color:#5f5f5f;letter-spacing:-0.376px;white-space:nowrap;z-index:3;">00000000</div>
<div style="position:absolute;left:3224.40px;top:1232.58px;font-size:32.5px;line-height:32.5px;font-weight:400;color:#5f5f5f;letter-spacing:-1.294px;white-space:nowrap;z-index:3;">R 0.00</div>
<svg style="position:absolute;left:3411px;top:1225px;z-index:3" width="35" height="46" viewBox="0 0 35 46"><circle cx="17" cy="27" r="15.4" fill="none" stroke="#f4c542" stroke-width="3.1"/><line x1="12.6" y1="5" x2="21.6" y2="5" stroke="#f4c542" stroke-width="3.2" stroke-linecap="round"/><line x1="17" y1="19" x2="17" y2="27.2" stroke="#f4c542" stroke-width="3.3" stroke-linecap="round"/><line x1="29.2" y1="14.6" x2="31" y2="12.8" stroke="#f4c542" stroke-width="2.8" stroke-linecap="round"/></svg>
<div style="position:absolute;left:3456.60px;top:1235.88px;font-size:28.5px;line-height:28.5px;font-weight:400;color:#f4c542;letter-spacing:-0.591px;white-space:nowrap;z-index:3;">10 min</div>
<svg style="position:absolute;left:3663.5px;top:1238.8px;z-index:3" width="16" height="23" viewBox="0 0 16 23"><polyline points="2,2 12.2,10.9 2,20" fill="none" stroke="#028ccb" stroke-width="3.6" stroke-linecap="round" stroke-linejoin="round"/></svg>
<div style="position:absolute;left:624px;top:1306px;width:3120px;height:2px;background:#fff"></div>
<div style="position:absolute;left:624px;top:1308px;width:3120px;height:112px;background:#ffffff"></div>
<div style="position:absolute;left:657.00px;top:1346.58px;font-size:32.5px;line-height:32.5px;font-weight:400;color:#5f5f5f;letter-spacing:-0.451px;white-space:nowrap;z-index:3;">00000000</div>
<div style="position:absolute;left:919.00px;top:1346.58px;font-size:32.5px;line-height:32.5px;font-weight:400;color:#5f5f5f;letter-spacing:-0.717px;white-space:nowrap;z-index:3;">Name Surname</div>
<div style="position:absolute;left:1514.50px;top:1346.58px;font-size:32.5px;line-height:32.5px;font-weight:400;color:#5f5f5f;letter-spacing:-0.401px;white-space:nowrap;z-index:3;">082 000 0000</div>
<div style="position:absolute;left:1831.00px;top:1346.58px;font-size:32.5px;line-height:32.5px;font-weight:400;color:#5f5f5f;letter-spacing:-0.861px;white-space:nowrap;z-index:3;">Delivery</div>
<div style="position:absolute;left:2124.40px;top:1346.58px;font-size:32.5px;line-height:32.5px;font-weight:400;color:#5f5f5f;letter-spacing:0.633px;white-space:nowrap;z-index:3;">00/00/0000</div>
<div style="position:absolute;left:2385.00px;top:1346.58px;font-size:32.5px;line-height:32.5px;font-weight:400;color:#5f5f5f;letter-spacing:-1.010px;white-space:nowrap;z-index:3;">New</div>
<div style="position:absolute;left:2677.00px;top:1349.98px;font-size:32.5px;line-height:32.5px;font-weight:400;color:#5f5f5f;letter-spacing:-0.376px;white-space:nowrap;z-index:3;">00000000</div>
<div style="position:absolute;left:3224.40px;top:1346.58px;font-size:32.5px;line-height:32.5px;font-weight:400;color:#5f5f5f;letter-spacing:-1.294px;white-space:nowrap;z-index:3;">R 0.00</div>
<svg style="position:absolute;left:3411px;top:1339px;z-index:3" width="35" height="46" viewBox="0 0 35 46"><circle cx="17" cy="27" r="15.4" fill="none" stroke="#f4c542" stroke-width="3.1"/><line x1="12.6" y1="5" x2="21.6" y2="5" stroke="#f4c542" stroke-width="3.2" stroke-linecap="round"/><line x1="17" y1="19" x2="17" y2="27.2" stroke="#f4c542" stroke-width="3.3" stroke-linecap="round"/><line x1="29.2" y1="14.6" x2="31" y2="12.8" stroke="#f4c542" stroke-width="2.8" stroke-linecap="round"/></svg>
<div style="position:absolute;left:3456.60px;top:1349.88px;font-size:28.5px;line-height:28.5px;font-weight:400;color:#f4c542;letter-spacing:-0.591px;white-space:nowrap;z-index:3;">10 min</div>
<svg style="position:absolute;left:3663.5px;top:1352.8px;z-index:3" width="16" height="23" viewBox="0 0 16 23"><polyline points="2,2 12.2,10.9 2,20" fill="none" stroke="#028ccb" stroke-width="3.6" stroke-linecap="round" stroke-linejoin="round"/></svg>
<div style="position:absolute;left:624px;top:1420px;width:3120px;height:2px;background:#fff"></div>
<div style="position:absolute;left:624px;top:1422px;width:3120px;height:112px;background:#f3f3f3"></div>
<div style="position:absolute;left:657.00px;top:1460.58px;font-size:32.5px;line-height:32.5px;font-weight:400;color:#5f5f5f;letter-spacing:-0.451px;white-space:nowrap;z-index:3;">00000000</div>
<div style="position:absolute;left:919.00px;top:1460.58px;font-size:32.5px;line-height:32.5px;font-weight:400;color:#5f5f5f;letter-spacing:-0.717px;white-space:nowrap;z-index:3;">Name Surname</div>
<div style="position:absolute;left:1514.50px;top:1460.58px;font-size:32.5px;line-height:32.5px;font-weight:400;color:#5f5f5f;letter-spacing:-0.401px;white-space:nowrap;z-index:3;">082 000 0000</div>
<div style="position:absolute;left:1831.00px;top:1460.58px;font-size:32.5px;line-height:32.5px;font-weight:400;color:#5f5f5f;letter-spacing:-0.861px;white-space:nowrap;z-index:3;">Delivery</div>
<div style="position:absolute;left:2124.40px;top:1460.58px;font-size:32.5px;line-height:32.5px;font-weight:400;color:#5f5f5f;letter-spacing:0.633px;white-space:nowrap;z-index:3;">00/00/0000</div>
<div style="position:absolute;left:2385.00px;top:1460.58px;font-size:32.5px;line-height:32.5px;font-weight:400;color:#5f5f5f;letter-spacing:-1.010px;white-space:nowrap;z-index:3;">New</div>
<div style="position:absolute;left:2677.00px;top:1463.98px;font-size:32.5px;line-height:32.5px;font-weight:400;color:#5f5f5f;letter-spacing:-0.376px;white-space:nowrap;z-index:3;">00000000</div>
<div style="position:absolute;left:3224.40px;top:1460.58px;font-size:32.5px;line-height:32.5px;font-weight:400;color:#5f5f5f;letter-spacing:-1.294px;white-space:nowrap;z-index:3;">R 0.00</div>
<svg style="position:absolute;left:3411px;top:1453px;z-index:3" width="35" height="46" viewBox="0 0 35 46"><circle cx="17" cy="27" r="15.4" fill="none" stroke="#22c263" stroke-width="3.1"/><line x1="12.6" y1="5" x2="21.6" y2="5" stroke="#22c263" stroke-width="3.2" stroke-linecap="round"/><line x1="17" y1="19" x2="17" y2="27.2" stroke="#22c263" stroke-width="3.3" stroke-linecap="round"/><line x1="29.2" y1="14.6" x2="31" y2="12.8" stroke="#22c263" stroke-width="2.8" stroke-linecap="round"/></svg>
<div style="position:absolute;left:3456.60px;top:1463.88px;font-size:28.5px;line-height:28.5px;font-weight:400;color:#22c263;letter-spacing:-0.591px;white-space:nowrap;z-index:3;">15 min</div>
<svg style="position:absolute;left:3663.5px;top:1466.8px;z-index:3" width="16" height="23" viewBox="0 0 16 23"><polyline points="2,2 12.2,10.9 2,20" fill="none" stroke="#028ccb" stroke-width="3.6" stroke-linecap="round" stroke-linejoin="round"/></svg>
<div style="position:absolute;left:624px;top:1534px;width:3120px;height:2px;background:#fff"></div>
<div style="position:absolute;left:624px;top:1536px;width:3120px;height:112px;background:#ffffff"></div>
<div style="position:absolute;left:657.00px;top:1574.58px;font-size:32.5px;line-height:32.5px;font-weight:400;color:#5f5f5f;letter-spacing:-0.451px;white-space:nowrap;z-index:3;">00000000</div>
<div style="position:absolute;left:919.00px;top:1574.58px;font-size:32.5px;line-height:32.5px;font-weight:400;color:#5f5f5f;letter-spacing:-0.717px;white-space:nowrap;z-index:3;">Name Surname</div>
<div style="position:absolute;left:1514.50px;top:1574.58px;font-size:32.5px;line-height:32.5px;font-weight:400;color:#5f5f5f;letter-spacing:-0.401px;white-space:nowrap;z-index:3;">082 000 0000</div>
<div style="position:absolute;left:1831.00px;top:1574.58px;font-size:32.5px;line-height:32.5px;font-weight:400;color:#5f5f5f;letter-spacing:-0.861px;white-space:nowrap;z-index:3;">Delivery</div>
<div style="position:absolute;left:2124.40px;top:1574.58px;font-size:32.5px;line-height:32.5px;font-weight:400;color:#5f5f5f;letter-spacing:0.633px;white-space:nowrap;z-index:3;">00/00/0000</div>
<div style="position:absolute;left:2385.00px;top:1574.58px;font-size:32.5px;line-height:32.5px;font-weight:400;color:#5f5f5f;letter-spacing:-1.010px;white-space:nowrap;z-index:3;">New</div>
<div style="position:absolute;left:2677.00px;top:1577.98px;font-size:32.5px;line-height:32.5px;font-weight:400;color:#5f5f5f;letter-spacing:-0.376px;white-space:nowrap;z-index:3;">00000000</div>
<div style="position:absolute;left:3224.40px;top:1574.58px;font-size:32.5px;line-height:32.5px;font-weight:400;color:#5f5f5f;letter-spacing:-1.294px;white-space:nowrap;z-index:3;">R 0.00</div>
<svg style="position:absolute;left:3411px;top:1567px;z-index:3" width="35" height="46" viewBox="0 0 35 46"><circle cx="17" cy="27" r="15.4" fill="none" stroke="#22c263" stroke-width="3.1"/><line x1="12.6" y1="5" x2="21.6" y2="5" stroke="#22c263" stroke-width="3.2" stroke-linecap="round"/><line x1="17" y1="19" x2="17" y2="27.2" stroke="#22c263" stroke-width="3.3" stroke-linecap="round"/><line x1="29.2" y1="14.6" x2="31" y2="12.8" stroke="#22c263" stroke-width="2.8" stroke-linecap="round"/></svg>
<div style="position:absolute;left:3456.60px;top:1577.88px;font-size:28.5px;line-height:28.5px;font-weight:400;color:#22c263;letter-spacing:-0.591px;white-space:nowrap;z-index:3;">15 min</div>
<svg style="position:absolute;left:3663.5px;top:1580.8px;z-index:3" width="16" height="23" viewBox="0 0 16 23"><polyline points="2,2 12.2,10.9 2,20" fill="none" stroke="#028ccb" stroke-width="3.6" stroke-linecap="round" stroke-linejoin="round"/></svg>
<div style="position:absolute;left:624px;top:1648px;width:3120px;height:2px;background:#fff"></div>
<div style="position:absolute;left:624px;top:1650px;width:3120px;height:112px;background:#f3f3f3"></div>
<div style="position:absolute;left:657.00px;top:1688.58px;font-size:32.5px;line-height:32.5px;font-weight:400;color:#5f5f5f;letter-spacing:-0.451px;white-space:nowrap;z-index:3;">00000000</div>
<div style="position:absolute;left:919.00px;top:1688.58px;font-size:32.5px;line-height:32.5px;font-weight:400;color:#5f5f5f;letter-spacing:-0.717px;white-space:nowrap;z-index:3;">Name Surname</div>
<div style="position:absolute;left:1514.50px;top:1688.58px;font-size:32.5px;line-height:32.5px;font-weight:400;color:#5f5f5f;letter-spacing:-0.401px;white-space:nowrap;z-index:3;">082 000 0000</div>
<div style="position:absolute;left:1831.00px;top:1688.58px;font-size:32.5px;line-height:32.5px;font-weight:400;color:#5f5f5f;letter-spacing:-0.861px;white-space:nowrap;z-index:3;">Delivery</div>
<div style="position:absolute;left:2124.40px;top:1688.58px;font-size:32.5px;line-height:32.5px;font-weight:400;color:#5f5f5f;letter-spacing:0.633px;white-space:nowrap;z-index:3;">00/00/0000</div>
<div style="position:absolute;left:2385.00px;top:1688.58px;font-size:32.5px;line-height:32.5px;font-weight:400;color:#5f5f5f;letter-spacing:-1.010px;white-space:nowrap;z-index:3;">New</div>
<div style="position:absolute;left:2677.00px;top:1691.98px;font-size:32.5px;line-height:32.5px;font-weight:400;color:#5f5f5f;letter-spacing:-0.376px;white-space:nowrap;z-index:3;">00000000</div>
<div style="position:absolute;left:3224.40px;top:1688.58px;font-size:32.5px;line-height:32.5px;font-weight:400;color:#5f5f5f;letter-spacing:-1.294px;white-space:nowrap;z-index:3;">R 0.00</div>
<svg style="position:absolute;left:3411px;top:1681px;z-index:3" width="35" height="46" viewBox="0 0 35 46"><circle cx="17" cy="27" r="15.4" fill="none" stroke="#22c263" stroke-width="3.1"/><line x1="12.6" y1="5" x2="21.6" y2="5" stroke="#22c263" stroke-width="3.2" stroke-linecap="round"/><line x1="17" y1="19" x2="17" y2="27.2" stroke="#22c263" stroke-width="3.3" stroke-linecap="round"/><line x1="29.2" y1="14.6" x2="31" y2="12.8" stroke="#22c263" stroke-width="2.8" stroke-linecap="round"/></svg>
<div style="position:absolute;left:3456.60px;top:1691.88px;font-size:28.5px;line-height:28.5px;font-weight:400;color:#22c263;letter-spacing:-0.591px;white-space:nowrap;z-index:3;">15 min</div>
<svg style="position:absolute;left:3663.5px;top:1694.8px;z-index:3" width="16" height="23" viewBox="0 0 16 23"><polyline points="2,2 12.2,10.9 2,20" fill="none" stroke="#028ccb" stroke-width="3.6" stroke-linecap="round" stroke-linejoin="round"/></svg>
<div style="position:absolute;left:624px;top:1762px;width:3120px;height:2px;background:#fff"></div>
<div style="position:absolute;left:624px;top:1764px;width:3120px;height:112px;background:#ffffff"></div>
<div style="position:absolute;left:657.00px;top:1802.58px;font-size:32.5px;line-height:32.5px;font-weight:400;color:#5f5f5f;letter-spacing:-0.451px;white-space:nowrap;z-index:3;">00000000</div>
<div style="position:absolute;left:919.00px;top:1802.58px;font-size:32.5px;line-height:32.5px;font-weight:400;color:#5f5f5f;letter-spacing:-0.717px;white-space:nowrap;z-index:3;">Name Surname</div>
<div style="position:absolute;left:1514.50px;top:1802.58px;font-size:32.5px;line-height:32.5px;font-weight:400;color:#5f5f5f;letter-spacing:-0.401px;white-space:nowrap;z-index:3;">082 000 0000</div>
<div style="position:absolute;left:1831.00px;top:1802.58px;font-size:32.5px;line-height:32.5px;font-weight:400;color:#5f5f5f;letter-spacing:-0.861px;white-space:nowrap;z-index:3;">Delivery</div>
<div style="position:absolute;left:2124.40px;top:1802.58px;font-size:32.5px;line-height:32.5px;font-weight:400;color:#5f5f5f;letter-spacing:0.633px;white-space:nowrap;z-index:3;">00/00/0000</div>
<div style="position:absolute;left:2385.00px;top:1802.58px;font-size:32.5px;line-height:32.5px;font-weight:400;color:#5f5f5f;letter-spacing:-1.010px;white-space:nowrap;z-index:3;">New</div>
<div style="position:absolute;left:2677.00px;top:1805.98px;font-size:32.5px;line-height:32.5px;font-weight:400;color:#5f5f5f;letter-spacing:-0.376px;white-space:nowrap;z-index:3;">00000000</div>
<div style="position:absolute;left:3224.40px;top:1802.58px;font-size:32.5px;line-height:32.5px;font-weight:400;color:#5f5f5f;letter-spacing:-1.294px;white-space:nowrap;z-index:3;">R 0.00</div>
<svg style="position:absolute;left:3411px;top:1795px;z-index:3" width="35" height="46" viewBox="0 0 35 46"><circle cx="17" cy="27" r="15.4" fill="none" stroke="#22c263" stroke-width="3.1"/><line x1="12.6" y1="5" x2="21.6" y2="5" stroke="#22c263" stroke-width="3.2" stroke-linecap="round"/><line x1="17" y1="19" x2="17" y2="27.2" stroke="#22c263" stroke-width="3.3" stroke-linecap="round"/><line x1="29.2" y1="14.6" x2="31" y2="12.8" stroke="#22c263" stroke-width="2.8" stroke-linecap="round"/></svg>
<div style="position:absolute;left:3456.60px;top:1805.88px;font-size:28.5px;line-height:28.5px;font-weight:400;color:#22c263;letter-spacing:-0.591px;white-space:nowrap;z-index:3;">15 min</div>
<svg style="position:absolute;left:3663.5px;top:1808.8px;z-index:3" width="16" height="23" viewBox="0 0 16 23"><polyline points="2,2 12.2,10.9 2,20" fill="none" stroke="#028ccb" stroke-width="3.6" stroke-linecap="round" stroke-linejoin="round"/></svg>
<div style="position:absolute;left:2284px;top:1908px;width:140px;height:76px;border:2px solid #b6babe;border-radius:9px;background:#fff"></div>
<div style="position:absolute;left:2317.50px;top:1933.78px;font-size:28.5px;line-height:28.5px;font-weight:400;color:#555555;letter-spacing:-1.102px;white-space:nowrap;z-index:3;">10</div>
<svg style="position:absolute;left:2377px;top:1941px;z-index:3" width="22" height="13" viewBox="0 0 22 13"><polyline points="2,2 11,11 20,2" fill="none" stroke="#028ccb" stroke-width="3" stroke-linecap="round" stroke-linejoin="round"/></svg>
<div style="position:absolute;left:2444px;top:1908px;width:80px;height:80px;background:#028ccb;border-radius:9px"></div>
<div style="position:absolute;left:2476.07px;top:1933.78px;font-size:28.5px;line-height:28.5px;font-weight:700;color:#ffffff;letter-spacing:0.000px;white-space:nowrap;z-index:3;">1</div>
<div style="position:absolute;left:2540px;top:1908px;width:76px;height:76px;border:2px solid #b6babe;border-radius:9px;background:#fff"></div>
<div style="position:absolute;left:2572.07px;top:1933.78px;font-size:28.5px;line-height:28.5px;font-weight:400;color:#555555;letter-spacing:0.000px;white-space:nowrap;z-index:3;">2</div>
<div style="position:absolute;left:2636px;top:1908px;width:76px;height:76px;border:2px solid #b6babe;border-radius:9px;background:#fff"></div>
<div style="position:absolute;left:2668.07px;top:1933.78px;font-size:28.5px;line-height:28.5px;font-weight:400;color:#555555;letter-spacing:0.000px;white-space:nowrap;z-index:3;">3</div>
<div style="position:absolute;left:2732px;top:1908px;width:76px;height:76px;border:2px solid #b6babe;border-radius:9px;background:#fff"></div>
<div style="position:absolute;left:2764.07px;top:1933.78px;font-size:28.5px;line-height:28.5px;font-weight:400;color:#555555;letter-spacing:0.000px;white-space:nowrap;z-index:3;">4</div>
<div style="position:absolute;left:2828px;top:1908px;width:76px;height:76px;border:2px solid #b6babe;border-radius:9px;background:#fff"></div>
<div style="position:absolute;left:2860.07px;top:1933.78px;font-size:28.5px;line-height:28.5px;font-weight:400;color:#555555;letter-spacing:0.000px;white-space:nowrap;z-index:3;">5</div>
<div style="position:absolute;left:2924px;top:1908px;width:76px;height:76px;border:2px solid #b6babe;border-radius:9px;background:#fff"></div>
<div style="position:absolute;left:2956.07px;top:1933.78px;font-size:28.5px;line-height:28.5px;font-weight:400;color:#555555;letter-spacing:0.000px;white-space:nowrap;z-index:3;">6</div>
<div style="position:absolute;left:3020px;top:1908px;width:76px;height:76px;border:2px solid #b6babe;border-radius:9px;background:#fff"></div>
<div style="position:absolute;left:3052.07px;top:1933.78px;font-size:28.5px;line-height:28.5px;font-weight:400;color:#555555;letter-spacing:0.000px;white-space:nowrap;z-index:3;">7</div>
<div style="position:absolute;left:3116px;top:1908px;width:76px;height:76px;border:2px solid #b6babe;border-radius:9px;background:#fff"></div>
<div style="position:absolute;left:3148.07px;top:1933.78px;font-size:28.5px;line-height:28.5px;font-weight:400;color:#555555;letter-spacing:0.000px;white-space:nowrap;z-index:3;">8</div>
<div style="position:absolute;left:3212px;top:1908px;width:76px;height:76px;border:2px solid #b6babe;border-radius:9px;background:#fff"></div>
<div style="position:absolute;left:3244.07px;top:1933.78px;font-size:28.5px;line-height:28.5px;font-weight:400;color:#555555;letter-spacing:0.000px;white-space:nowrap;z-index:3;">9</div>
<div style="position:absolute;left:3308.5px;top:1908px;width:76px;height:76px;border:2px solid #b6babe;border-radius:9px;background:#fff"></div>
<div style="position:absolute;left:3332.65px;top:1933.78px;font-size:28.5px;line-height:28.5px;font-weight:400;color:#555555;letter-spacing:0.000px;white-space:nowrap;z-index:3;">10</div>
<div style="position:absolute;left:3500.5px;top:1908px;width:76px;height:76px;border:2px solid #b6babe;border-radius:9px;background:#fff"></div>
<div style="position:absolute;left:3525.50px;top:1933.78px;font-size:28.5px;line-height:28.5px;font-weight:400;color:#555555;letter-spacing:-0.852px;white-space:nowrap;z-index:3;">15</div>
<svg style="position:absolute;left:3428px;top:1959.5px;z-index:3" width="33" height="10" viewBox="0 0 33 10"><circle cx="4.5" cy="4.5" r="4.3" fill="#028ccb"/><circle cx="16.3" cy="4.5" r="4.3" fill="#028ccb"/><circle cx="28.1" cy="4.5" r="4.3" fill="#028ccb"/></svg>
<div style="position:absolute;left:3598.00px;top:1930.78px;font-size:32.5px;line-height:32.5px;font-weight:400;color:#555555;letter-spacing:-0.707px;white-space:nowrap;z-index:3;">Next</div>
<svg style="position:absolute;left:3693px;top:1931px;z-index:3" width="21" height="35" viewBox="0 0 21 35"><polyline points="3,3 17,17.5 3,32" fill="none" stroke="#028ccb" stroke-width="4" stroke-linecap="round" stroke-linejoin="round"/></svg>
</div>
</body></html>
